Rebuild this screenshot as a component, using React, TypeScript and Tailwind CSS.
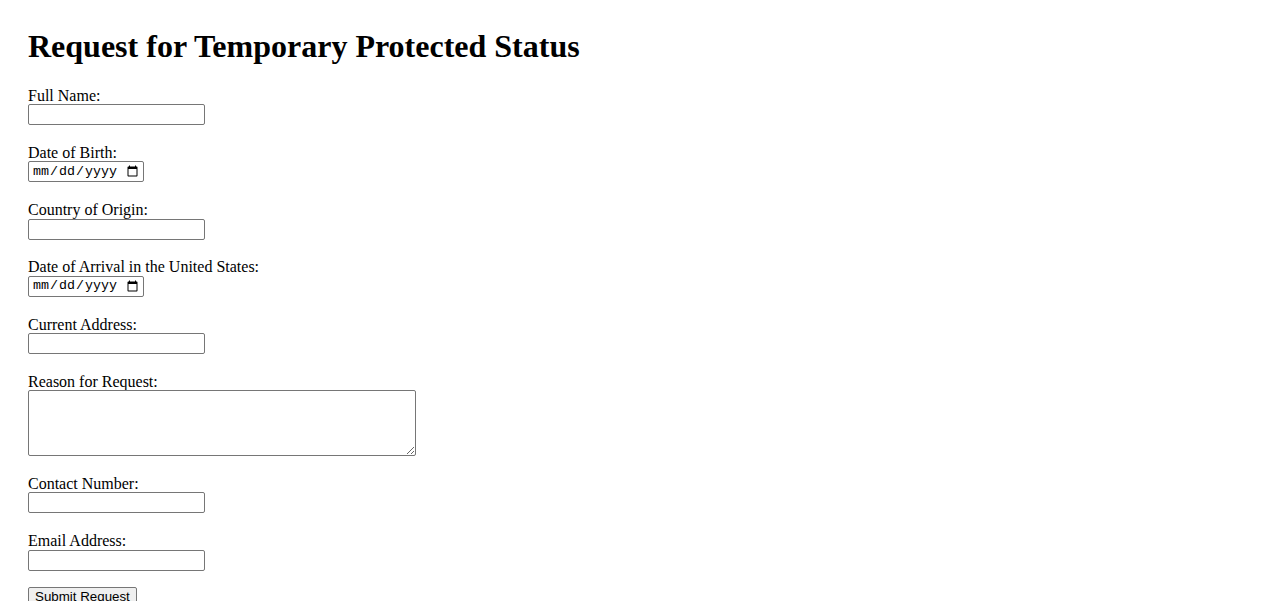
const fields = [
  { label: 'Full Name:', type: 'text' },
  { label: 'Date of Birth:', type: 'date' },
  { label: 'Country of Origin:', type: 'text' },
  { label: 'Date of Arrival in the United States:', type: 'date' },
  { label: 'Current Address:', type: 'text' },
  { label: 'Reason for Request:', type: 'textarea' },
  { label: 'Contact Number:', type: 'tel' },
  { label: 'Email Address:', type: 'email' },
];

function Field({ label, type }: { label: string; type: string }) {
  const box = 'border border-[#767676] rounded-[2px] bg-white -mt-[1px]';
  return (
    <div className="flex flex-col items-start">
      <label className="text-base leading-[18.4px] pt-[2px]">{label}</label>
      {type === 'textarea' ? (
        <textarea className={`${box} w-[388px] h-[66px] p-[2px] text-[13.33px] font-['Liberation_Mono',monospace]`} />
      ) : type === 'date' ? (
        <input
          type="date"
          className={`${box} w-[116px] h-[21px] pl-[3px] pr-[2px] text-[13.33px] font-['Liberation_Mono',monospace]`}
        />
      ) : (
        <input
          type={type}
          className={`${box} w-[177px] h-[21px] px-[2px] text-[13.33px] font-['Liberation_Sans',Arial,sans-serif]`}
        />
      )}
    </div>
  );
}

export default function App() {
  return (
    <div className="min-h-screen bg-white text-black p-[28px] font-['Liberation_Serif','Times_New_Roman',serif]">
      <h1 className="text-[32px] font-bold leading-[36.8px] mb-[20px]">
        Request for Temporary Protected Status
      </h1>
      <form className="flex flex-col gap-[16.8px]">
        {fields.map((f) => (
          <Field key={f.label} label={f.label} type={f.type} />
        ))}
        <div className="-mt-[3px]">
          <button
            type="submit"
            className="bg-[#efefef] border border-[#767676] rounded-[2px] px-[6px] py-[1px] text-[13.33px] leading-[15px] font-['Liberation_Sans',Arial,sans-serif]"
          >
            Submit Request
          </button>
        </div>
      </form>
    </div>
  );
}
